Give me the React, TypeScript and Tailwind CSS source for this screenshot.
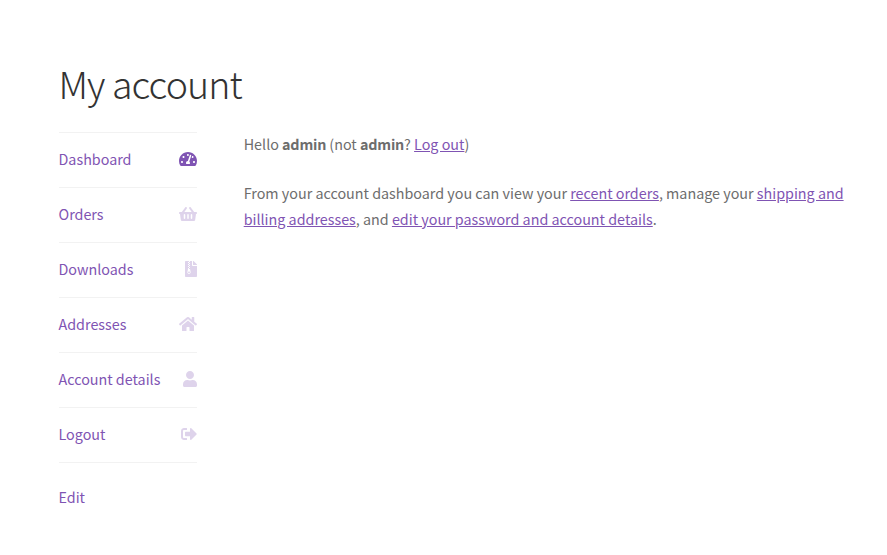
import type { ReactNode } from "react";
import { FaTachometerAlt, FaShoppingBasket, FaFileArchive, FaHome, FaUser, FaSignOutAlt } from "react-icons/fa";

const items = [
  { label: "Dashboard", Icon: FaTachometerAlt, look: "w-[18px]" },
  { label: "Orders", Icon: FaShoppingBasket, look: "w-[18px] opacity-25" },
  { label: "Downloads", Icon: FaFileArchive, look: "w-3 opacity-25" },
  { label: "Addresses", Icon: FaHome, look: "w-[18px] opacity-25" },
  { label: "Account details", Icon: FaUser, look: "w-3.5 opacity-25" },
  { label: "Logout", Icon: FaSignOutAlt, look: "w-4 opacity-25" },
];

function Link({ children }: { children: ReactNode }) {
  return <a href="#" className="text-[#7f54b3] underline">{children}</a>;
}

function Name({ children }: { children: ReactNode }) {
  return <strong className="font-bold tracking-[-0.2px]">{children}</strong>;
}

export default function App() {
  return (
    <div className="h-[555px] w-[887px] bg-white pl-[58.5px] pt-[57px] font-['Source_Sans_Pro','Noto_Sans_CJK_SC',sans-serif] text-[14.33px] text-[#6d6d6d]">
      <h1 className="text-[37.5px] leading-[52px] font-light tracking-[-0.9px] text-[#333]">My account</h1>
      <div className="mt-[23px] flex">
        <nav className="w-[138.7px] shrink-0 border-t border-black/5 text-[#7f54b3]">
          {items.map(({ label, Icon, look }) => (
            <a key={label} href="#" className="flex h-[55px] items-center justify-between border-b border-black/5 pb-0.5">
              <span>{label}</span>
              <Icon className={`h-4 ${look}`} />
            </a>
          ))}
        </nav>
        <main className="-mt-px ml-[46.5px] w-[620px] shrink-0 leading-[26px]">
          <p className="mb-[23px]">Hello <Name>admin</Name> (not <Name>admin</Name>? <Link>Log out</Link>)</p>
          <p>From your account dashboard you can view your <Link>recent orders</Link>, manage your <Link>shipping and<br />billing addresses</Link>, and <Link>edit your password and account details</Link>.</p>
        </main>
      </div>
      <a href="#" className="mt-[21px] block leading-[26px] text-[#7f54b3]">Edit</a>
    </div>
  );
}
